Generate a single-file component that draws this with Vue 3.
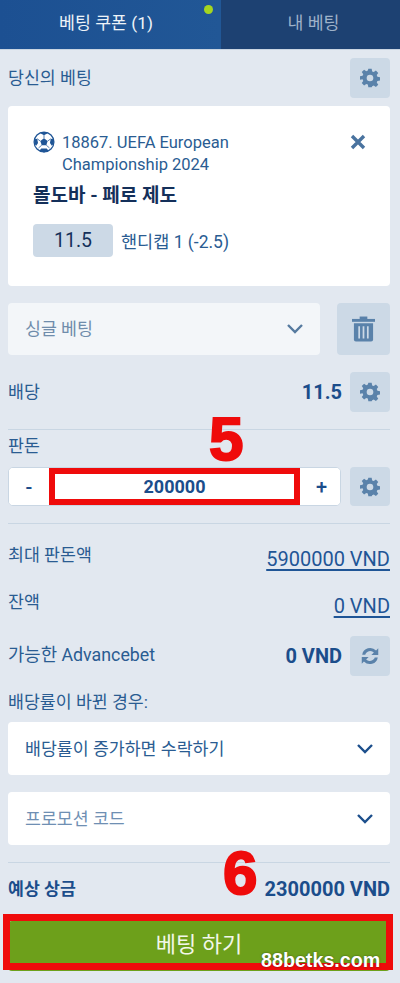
<script setup>
const rows = [
  { label: "최대 판돈액", value: "5900000 VND" },
  { label: "잔액", value: "0 VND" },
];
</script>

<template>
  <div class="page">
    <div class="tabs">
      <div class="tab active">베팅 쿠폰 (1)<span class="dot"></span></div>
      <div class="tab">내 베팅</div>
    </div>

    <div class="content">
      <div class="row head">
        <span class="label">당신의 베팅</span>
        <button class="square">
          <svg class="gear" viewBox="0 0 24 24"><use href="#gear-icon" /></svg>
        </button>
      </div>

      <div class="card">
        <div class="league">
          <svg class="ball" viewBox="0 0 24 24">
            <circle cx="12" cy="12" r="10.8" fill="#fff" stroke="#1f5596" stroke-width="1.4" />
            <polygon points="12,8 16,11 14.5,15.5 9.5,15.5 8,11" fill="#1f5596" />
            <path d="M8 2.5 12 4.6 16 2.5 15.5 1 8.5 1Z" fill="#1f5596" />
            <path d="M1.5 9 4.6 8.5 5.5 13 3.5 16 1.5 14Z" fill="#1f5596" />
            <path d="M22.5 9 19.4 8.5 18.5 13 20.5 16 22.5 14Z" fill="#1f5596" />
            <path d="M7 21.5 9 19 15 19 17 21.5 12 23.4Z" fill="#1f5596" />
            <path d="M12 8V4.5M16 11l3.4-2.5M8 11 4.6 8.5M14.5 15.5l3.5 3M9.5 15.5 6 18.5" stroke="#1f5596" stroke-width="0.8" />
          </svg>
          <div class="league-name">18867. UEFA European Championship 2024</div>
          <svg class="close" viewBox="0 0 16 16">
            <path d="M2 2 14 14M14 2 2 14" stroke="#4a739f" stroke-width="3.4" />
          </svg>
        </div>
        <div class="match">몰도바 - 페로 제도</div>
        <div class="pick">
          <span class="odds-box">11.5</span>
          <span class="pick-name">핸디캡 1 (-2.5)</span>
        </div>
      </div>

      <div class="bet-type">
        <div class="select muted">
          <span>싱글 베팅</span>
          <svg class="chev" viewBox="0 0 18 12"><path d="M2 2 9 9 16 2" fill="none" stroke="#557a9f" stroke-width="2.4" /></svg>
        </div>
        <button class="trash-btn">
          <svg class="trash" viewBox="0 0 24 26">
            <rect x="8" y="0" width="8" height="3" fill="#5a82aa" />
            <rect x="0" y="2.5" width="24" height="3" fill="#5a82aa" />
            <path d="M2 7H22V24a2 2 0 0 1-2 2H4a2 2 0 0 1-2-2Z" fill="#5a82aa" />
            <path d="M7.5 10V23M12 10V23M16.5 10V23" stroke="#ccd9e6" stroke-width="1.8" />
          </svg>
        </button>
      </div>

      <div class="row odds-row">
        <span class="label">배당</span>
        <div class="right">
          <b class="strong">11.5</b>
          <button class="square">
            <svg class="gear" viewBox="0 0 24 24"><use href="#gear-icon" /></svg>
          </button>
        </div>
      </div>

      <div class="line first"></div>

      <div class="label stake-label">판돈</div>
      <div class="stake">
        <div class="stepper">
          <button class="step minus">-</button>
          <div class="amount">200000</div>
          <button class="step plus">+</button>
        </div>
        <button class="square">
          <svg class="gear" viewBox="0 0 24 24"><use href="#gear-icon" /></svg>
        </button>
        <span class="mark five">5</span>
      </div>

      <div class="line second"></div>

      <div class="info-list">
        <div v-for="r in rows" :key="r.label" class="row info">
          <span class="label up">{{ r.label }}</span>
          <a class="link">{{ r.value }}</a>
        </div>
      </div>

      <div class="row advance">
        <span class="label wide">가능한 Advancebet</span>
        <div class="right">
          <b class="strong">0 VND</b>
          <button class="square">
            <svg class="refresh" viewBox="0 0 24 24">
              <path d="M3.5 10.5A8.8 8.8 0 0 1 18.6 6L21 3.5V11H13.5L16.2 8.3A5.6 5.6 0 0 0 6.8 10.5Z" fill="#5a82aa" />
              <path d="M20.5 13.5A8.8 8.8 0 0 1 5.4 18L3 20.5V13H10.5L7.8 15.7A5.6 5.6 0 0 0 17.2 13.5Z" fill="#5a82aa" />
            </svg>
          </button>
        </div>
      </div>

      <div class="label change-label">배당률이 바뀐 경우:</div>
      <div class="select white">
        <span>배당률이 증가하면 수락하기</span>
        <svg class="chev" viewBox="0 0 18 12"><path d="M2 2 9 9 16 2" fill="none" stroke="#1c4f8c" stroke-width="2.4" /></svg>
      </div>
      <div class="select white promo">
        <span>프로모션 코드</span>
        <svg class="chev" viewBox="0 0 18 12"><path d="M2 2 9 9 16 2" fill="none" stroke="#1c4f8c" stroke-width="2.4" /></svg>
      </div>

      <div class="line third"></div>

      <div class="row winnings">
        <b class="strong small">예상 상금</b>
        <b class="strong">2300000 VND</b>
        <span class="mark six">6</span>
      </div>

      <div class="submit-wrap">
        <button class="submit">베팅 하기</button>
        <span class="frame"></span>
        <span class="watermark">88betks.com</span>
      </div>
    </div>

    <svg class="defs" width="0" height="0">
      <symbol id="gear-icon" viewBox="0 0 24 24">
        <path fill="#5a82aa" fill-rule="evenodd" d="M10 1h4l.6 3.1 1.9.8 2.6-1.8 2.8 2.8-1.8 2.6.8 1.9 3.1.6v4l-3.1.6-.8 1.9 1.8 2.6-2.8 2.8-2.6-1.8-1.9.8L14 23h-4l-.6-3.1-1.9-.8-2.6 1.8-2.8-2.8 1.8-2.6-.8-1.9L0 14v-4l3.1-.6.8-1.9L2.1 4.9l2.8-2.8 2.6 1.8 1.9-.8ZM12 8a4 4 0 1 0 0 8 4 4 0 0 0 0-8Z" />
      </symbol>
    </svg>
  </div>
</template>

<style scoped>
.page {
  width: 400px;
  height: 983px;
  overflow: hidden;
  background: #e2e8f0;
  font-family: Roboto, "Noto Sans CJK KR", sans-serif;
  color: #1f5596;
}
button {
  border: none;
  padding: 0;
  font-family: inherit;
}
.tabs {
  display: flex;
  height: 50px;
  border-bottom: 1px solid #c9d5e2;
  box-sizing: border-box;
}
.tab {
  position: relative;
  display: flex;
  align-items: center;
  justify-content: center;
  flex: 0 0 179px;
  padding: 0 0 7px 6px;
  box-sizing: border-box;
  font-size: 17.3px;
  background: #1d4172;
  color: #9fb2c9;
}
.tab.active {
  flex: 0 0 221px;
  padding: 0 9px 7px 0;
  background: linear-gradient(90deg, #1c5092, #215796);
  color: #eef3f8;
}
.dot {
  position: absolute;
  top: 5px;
  right: 8px;
  width: 9px;
  height: 9px;
  border-radius: 50%;
  background: #a5d620;
}
.content {
  padding: 8px 10px 0 8px;
}
.row {
  display: flex;
  align-items: center;
  justify-content: space-between;
  position: relative;
}
.right {
  display: flex;
  align-items: center;
  gap: 8px;
}
.label {
  font-size: 17.3px;
  color: #2a5c92;
}
.row .label {
  padding-bottom: 4px;
}
.row .label.wide {
  font-size: 17.8px;
  padding-bottom: 6px;
}
.square {
  display: flex;
  align-items: center;
  justify-content: center;
  width: 40px;
  height: 40px;
  border-radius: 4px;
  background: #ccd9e6;
}
.gear {
  width: 20px;
  height: 20px;
}
.refresh {
  width: 22px;
  height: 22px;
}
.card {
  margin-top: 8px;
  height: 180px;
  box-sizing: border-box;
  padding: 24px 24px 0 25px;
  background: #fff;
  border-radius: 4px;
}
.league {
  display: flex;
  align-items: flex-start;
}
.ball {
  flex: none;
  width: 22px;
  height: 22px;
  margin-right: 7px;
  margin-top: 1px;
}
.league-name {
  width: 195px;
  padding-top: 2px;
  font-size: 16.5px;
  line-height: 22px;
  color: #2a5c92;
}
.close {
  width: 16px;
  height: 16px;
  margin-left: auto;
  margin-top: 4px;
}
.match {
  margin-top: 7px;
  font-size: 19px;
  line-height: 26px;
  font-weight: 700;
  color: #14305a;
}
.pick {
  display: flex;
  align-items: center;
  margin-top: 15px;
}
.odds-box {
  width: 80px;
  height: 33px;
  line-height: 33px;
  text-align: center;
  border-radius: 4px;
  background: #ccd9e6;
  font-size: 19.5px;
  color: #14305a;
}
.pick-name {
  margin-left: 8px;
  font-size: 17.5px;
  color: #2a5c92;
}
.bet-type {
  display: flex;
  justify-content: space-between;
  margin-top: 17px;
}
.select {
  display: flex;
  align-items: center;
  justify-content: space-between;
  height: 53px;
  box-sizing: border-box;
  padding: 0 16px 0 17px;
  border-radius: 4px;
  font-size: 17.3px;
}
.select span {
  padding-bottom: 3px;
}
.select.muted {
  width: 312px;
  height: 52px;
  background: #f3f6f9;
  color: #6f8cab;
}
.select.white {
  background: #fff;
  color: #2a5c92;
}
.select.promo {
  margin-top: 17px;
  color: #6f8fb3;
}
.chev {
  width: 18px;
  height: 12px;
}
.trash-btn {
  display: flex;
  align-items: center;
  justify-content: center;
  width: 53px;
  height: 52px;
  border-radius: 4px;
  background: #ccd9e6;
}
.trash {
  width: 23px;
  height: 26px;
}
.odds-row {
  margin-top: 17px;
}
.strong {
  font-size: 20px;
  font-weight: 700;
  color: #1b4d8b;
}
.strong.small {
  font-size: 17.3px;
  padding-bottom: 4px;
}
.line {
  height: 1px;
  background: #c9d6e3;
}
.line.first {
  margin-top: 17px;
}
.stake-label {
  margin-top: 5px;
  line-height: 22px;
}
.stake {
  position: relative;
  display: flex;
  justify-content: space-between;
  margin-top: 10px;
}
.stake .square {
  height: 39px;
}
.stepper {
  display: flex;
  width: 333px;
  height: 39px;
  box-sizing: border-box;
  border: 1px solid #c9d6e3;
  border-radius: 5px;
  background: #fff;
}
.step {
  width: 40px;
  flex: none;
  background: #fff;
  border-radius: 4px;
  font-size: 20px;
  font-weight: 500;
  color: #1b4d8b;
}
.step.plus {
  padding-left: 3px;
}
.amount {
  flex: 1;
  box-sizing: border-box;
  border: 6px solid #ef0b0b;
  background: #fff;
  text-align: center;
  line-height: 25px;
  font-size: 18px;
  font-weight: 700;
  color: #1b4d8b;
}
.mark {
  position: absolute;
  font-family: "Liberation Sans", Arial, sans-serif;
  font-weight: 700;
  color: #ef0b0b;
  -webkit-text-stroke: 2px #ef0b0b;
}
.five {
  left: 201px;
  top: -59px;
  font-size: 62px;
  line-height: 62px;
}
.six {
  left: 215px;
  top: -36px;
  font-size: 62px;
  line-height: 62px;
}
.line.second {
  margin-top: 17px;
}
.info-list {
  margin-top: 11px;
}
.info {
  height: 47px;
}
.label.up {
  margin-top: -6px;
}
.link {
  font-size: 20px;
  color: #1f5596;
  text-decoration: underline;
  text-underline-offset: 3px;
}
.advance {
  margin-top: 7px;
}
.change-label {
  margin-top: 15px;
  line-height: 22px;
}
.change-label + .select {
  margin-top: 9px;
}
.line.third {
  margin-top: 17px;
}
.winnings {
  margin-top: 15px;
  height: 22px;
}
.submit-wrap {
  position: relative;
  margin-top: 21px;
  height: 50px;
}
.submit {
  width: 100%;
  height: 50px;
  background: #6da01b;
  border-radius: 4px;
  color: #f2f7e9;
  font-size: 22px;
  padding-bottom: 9px;
}
.frame {
  position: absolute;
  left: -5px;
  right: -3px;
  top: -7px;
  height: 56px;
  box-sizing: border-box;
  border: 7px solid #ef0b0b;
}
.watermark {
  position: absolute;
  left: 253px;
  top: 27px;
  font-family: "Liberation Sans", Arial, sans-serif;
  font-weight: 700;
  font-size: 19.7px;
  line-height: 24px;
  color: #fff;
  text-shadow: 0 0 2px rgba(0, 0, 0, 0.5);
}
.defs {
  position: absolute;
}
</style>
